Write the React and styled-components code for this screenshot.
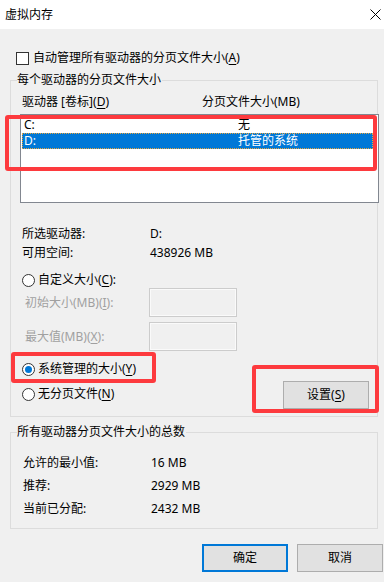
import React from "react";
import styled, { createGlobalStyle, css } from "styled-components";

const GlobalStyle = createGlobalStyle`
  html, body { margin: 0; padding: 0; background: #f0f0f0; }
  body {
    font-family: "Noto Sans", "Noto Sans CJK SC", sans-serif;
    font-size: 12px;
    color: #000;
  }
  * { box-sizing: border-box; }
`;

const Window = styled.div`
  position: relative;
  width: 384px;
  height: 582px;
  background: #f0f0f0;
  overflow: hidden;
  line-height: 16px;
`;

const TitleBar = styled.div`
  height: 29px;
  background: #fff;
  display: flex;
  align-items: center;
  justify-content: space-between;
  padding: 0 3px 0 5px;
`;

const Title = styled.span`
  line-height: 16px;
`;

const Body = styled.div`
  padding: 21px 6px 0 10px;
`;

const CheckRow = styled.label`
  display: flex;
  align-items: center;
  gap: 4px;
  margin-left: 6px;
  height: 16px;
`;

const CheckBox = styled.span`
  width: 13px;
  height: 13px;
  border: 1px solid #333;
  background: #fff;
  flex: none;
`;

const GroupBox = styled.div`
  border: 1px solid #dcdcdc;
  margin-top: ${(p) => p.$mt}px;
  padding: 0 0 ${(p) => p.$pb}px ${(p) => p.$pl}px;
`;

const Legend = styled.div`
  width: fit-content;
  margin: -9px 0 0 ${(p) => p.$ml}px;
  padding-right: 1px;
  background: #f0f0f0;
  line-height: 16px;
`;

const U = styled.span`
  text-decoration: underline;
  text-underline-offset: 2px;
`;

const HeaderRow = styled.div`
  display: grid;
  grid-template-columns: 180px auto;
  margin-top: 6px;
`;

const ListBox = styled.div`
  position: relative;
  margin: 4px 0 0 -2px;
  width: 359px;
  height: 89px;
  border: 1px solid #828790;
  background: #fff;
  padding: 2px 0 0 1px;
`;

const ListRow = styled.div`
  width: 351px;
  height: 16px;
  display: grid;
  grid-template-columns: 214px 1fr;
  padding-left: 2px;
  ${(p) =>
    p.$selected &&
    css`
      background: #0078d7;
      color: #fff;
      outline: 1px dotted #e9a53c;
      outline-offset: -1px;
    `}
`;

const InfoGrid = styled.div`
  display: grid;
  grid-template-columns: ${(p) => p.$col}px auto;
  row-gap: ${(p) => p.$gap}px;
  margin-top: ${(p) => p.$mt}px;
`;

const RadioRow = styled.label`
  display: flex;
  align-items: center;
  gap: 3px;
  height: 16px;
  margin-top: ${(p) => p.$mt || 0}px;
`;

const RadioCircle = styled.span`
  width: 13px;
  height: 13px;
  border-radius: 50%;
  border: 1px solid #333;
  background: #fff;
  flex: none;
  display: flex;
  align-items: center;
  justify-content: center;
  &::after {
    content: "";
    display: ${(p) => (p.$checked ? "block" : "none")};
    width: 7px;
    height: 7px;
    border-radius: 50%;
    background: #0078d7;
  }
`;

const SizeGrid = styled.div`
  display: grid;
  grid-template-columns: 124px 88px;
  row-gap: 5px;
  align-items: center;
  margin-left: 3px;
  color: #a0a0a0;
`;

const TextBox = styled.div`
  width: 88px;
  height: 29px;
  border: 1px solid #cccccc;
  box-shadow: inset 0 0 0 1px #fafafa;
  background: #f0f0f0;
`;

const BottomRow = styled.div`
  display: flex;
  align-items: flex-end;
  justify-content: space-between;
  margin-top: 10px;
  padding-right: 8px;
`;

const RadioColumn = styled.div`
  display: flex;
  flex-direction: column;
  gap: 9px;
  padding-bottom: 7px;
`;

const Button = styled.button`
  width: 86px;
  height: 28px;
  font: inherit;
  line-height: 16px;
  color: #000;
  background: #e1e1e1;
  border: ${(p) => (p.$default ? "2px solid #0078d7" : "1px solid #adadad")};
  padding: 0;
  display: flex;
  align-items: center;
  justify-content: center;
`;

const Footer = styled.div`
  display: flex;
  justify-content: flex-end;
  gap: 9px;
  margin: 15px -5px 0 0;
`;

const Annotation = styled.div`
  position: absolute;
  left: ${(p) => p.$x}px;
  top: ${(p) => p.$y}px;
  width: ${(p) => p.$w}px;
  height: ${(p) => p.$h}px;
  border: 4px solid #fd3a3e;
  border-radius: 3px;
  pointer-events: none;
`;

const CloseIcon = () => (
  <svg width="11" height="11" viewBox="0 0 11 11" style={{ display: "block" }}>
    <path d="M0.5 0.5 L10.5 10.5 M10.5 0.5 L0.5 10.5" stroke="#000" strokeWidth="1" fill="none" />
  </svg>
);

export default function App() {
  return (
    <>
      <GlobalStyle />
      <Window>
        <TitleBar>
          <Title>虚拟内存</Title>
          <CloseIcon />
        </TitleBar>
        <Body>
          <CheckRow>
            <CheckBox />
            <span>
              自动管理所有驱动器的分页文件大小(<U>A</U>)
            </span>
          </CheckRow>

          <GroupBox $mt={14} $pb={7} $pl={11}>
            <Legend $ml={-5}>每个驱动器的分页文件大小</Legend>
            <HeaderRow>
              <span>
                驱动器 [卷标](<U>D</U>)
              </span>
              <span>分页文件大小(MB)</span>
            </HeaderRow>
            <ListBox>
              <ListRow>
                <span>C:</span>
                <span>无</span>
              </ListRow>
              <ListRow $selected>
                <span>D:</span>
                <span>托管的系统</span>
              </ListRow>
            </ListBox>

            <InfoGrid $col={128} $gap={3} $mt={23}>
              <span>所选驱动器:</span>
              <span>D:</span>
              <span>可用空间:</span>
              <span>438926 MB</span>
            </InfoGrid>

            <RadioRow $mt={11}>
              <RadioCircle />
              <span>
                自定义大小(<U>C</U>):
              </span>
            </RadioRow>

            <SizeGrid>
              <span>
                初始大小(MB)(<U>I</U>):
              </span>
              <TextBox />
              <span>
                最大值(MB)(<U>X</U>):
              </span>
              <TextBox />
            </SizeGrid>

            <BottomRow>
              <RadioColumn>
                <RadioRow>
                  <RadioCircle $checked />
                  <span>
                    系统管理的大小(<U>Y</U>)
                  </span>
                </RadioRow>
                <RadioRow>
                  <RadioCircle />
                  <span>
                    无分页文件(<U>N</U>)
                  </span>
                </RadioRow>
              </RadioColumn>
              <Button>
                设置(<U>S</U>)
              </Button>
            </BottomRow>
          </GroupBox>

          <GroupBox $mt={15} $pb={11} $pl={12}>
            <Legend $ml={-6}>所有驱动器分页文件大小的总数</Legend>
            <InfoGrid $col={128} $gap={7} $mt={15}>
              <span>允许的最小值:</span>
              <span>16 MB</span>
              <span>推荐:</span>
              <span>2929 MB</span>
              <span>当前已分配:</span>
              <span>2432 MB</span>
            </InfoGrid>
          </GroupBox>

          <Footer>
            <Button $default>确定</Button>
            <Button>取消</Button>
          </Footer>
        </Body>

        <Annotation $x={5} $y={115} $w={372} $h={56} />
        <Annotation $x={11} $y={352} $w={145} $h={31} />
        <Annotation $x={252} $y={365} $w={127} $h={48} />
      </Window>
    </>
  );
}
